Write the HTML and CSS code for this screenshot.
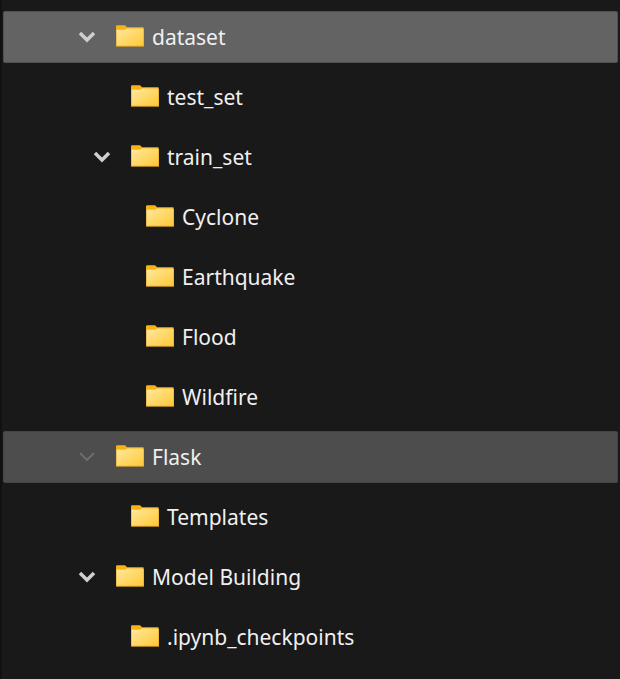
FILE: index.html
```
<!DOCTYPE html>
<html lang="en">
<head>
<meta charset="utf-8">
<title>Folders</title>
<link rel="stylesheet" href="styles.css">
</head>
<body>
<svg class="defs" aria-hidden="true">
  <defs>
    <linearGradient id="front" x1="0" y1="0" x2="1" y2="1">
      <stop offset="0" stop-color="#ffe8a0"/>
      <stop offset="1" stop-color="#ffc935"/>
    </linearGradient>
    <symbol id="folder" viewBox="0 0 28 22">
      <path fill="#f8b214" d="M0 1.5Q0 .3 1.2 .3H8.600q.8 0 1.300.6L11 2.300H27.500V8H0z"/>
      <path fill="#d9a02c" d="M0 4H28V21.200q0 .5-.5.5H.5q-.5 0-.5-.5z"/>
      <path fill="url(#front)" d="M.5 4.600H8.500q.8 0 1.400-.4L11 3.500H27.500V20.800H.5z"/>
    </symbol>
    <symbol id="chevron" viewBox="0 0 18 12">
      <path fill="none" stroke="currentColor" d="M2 2l7 7 7-7"/>
    </symbol>
  </defs>
</svg>
<ul class="tree" role="tree">
  <li class="row selected" role="treeitem"><button class="toggle" aria-label="Collapse dataset"><svg><use href="#chevron"/></svg></button><svg class="folder"><use href="#folder"/></svg><span>dataset</span></li>
  <li class="row level-2" role="treeitem"><svg class="folder"><use href="#folder"/></svg><span>test_set</span></li>
  <li class="row level-2" role="treeitem"><button class="toggle" aria-label="Collapse train_set"><svg><use href="#chevron"/></svg></button><svg class="folder"><use href="#folder"/></svg><span>train_set</span></li>
  <li class="row level-3" role="treeitem"><svg class="folder"><use href="#folder"/></svg><span>Cyclone</span></li>
  <li class="row level-3" role="treeitem"><svg class="folder"><use href="#folder"/></svg><span>Earthquake</span></li>
  <li class="row level-3" role="treeitem"><svg class="folder"><use href="#folder"/></svg><span>Flood</span></li>
  <li class="row level-3" role="treeitem"><svg class="folder"><use href="#folder"/></svg><span>Wildfire</span></li>
  <li class="row hovered" role="treeitem"><button class="toggle faint" aria-label="Collapse Flask"><svg><use href="#chevron"/></svg></button><svg class="folder"><use href="#folder"/></svg><span>Flask</span></li>
  <li class="row level-2" role="treeitem"><svg class="folder"><use href="#folder"/></svg><span>Templates</span></li>
  <li class="row" role="treeitem"><button class="toggle" aria-label="Collapse Model Building"><svg><use href="#chevron"/></svg></button><svg class="folder"><use href="#folder"/></svg><span>Model Building</span></li>
  <li class="row level-2" role="treeitem"><svg class="folder"><use href="#folder"/></svg><span>.ipynb_checkpoints</span></li>
</ul>
</body>
</html>
```
FILE: styles.css
```
* { box-sizing: border-box; }
body {
  margin: 0;
  min-height: 100vh;
  background: #191919;
  border-left: 2px solid #111;
  color: #f0f0f0;
  font: 21px/30px "Noto Sans", "Open Sans", sans-serif;
}
.defs { position: absolute; width: 0; height: 0; }
.tree {
  list-style: none;
  margin: 0;
  padding: 11px 2px 0 1px;
  display: flex;
  flex-direction: column;
  gap: 8px;
}
.row {
  display: grid;
  grid-template-columns: 30px 28px 1fr;
  column-gap: 8px;
  align-items: center;
  height: 52px;
  padding-left: 74px;
  border: 1px solid transparent;
  border-radius: 2px;
}
.level-2 { padding-left: 89px; }
.level-3 { padding-left: 104px; }
.selected { background: #636363; border-color: #505050; }
.hovered { background: #4d4d4d; border-color: #444; }
.toggle {
  grid-column: 1;
  display: flex;
  width: 18px;
  height: 12px;
  padding: 0;
  border: 0;
  background: none;
  color: #cfcfcf;
  stroke-width: 3.5;
}
.toggle svg { width: 18px; height: 12px; }
.faint { color: #6c6c6c; stroke-width: 2; }
.folder { grid-column: 2; width: 28px; height: 22px; margin-bottom: 2px; }
.row span { grid-column: 3; }
```
